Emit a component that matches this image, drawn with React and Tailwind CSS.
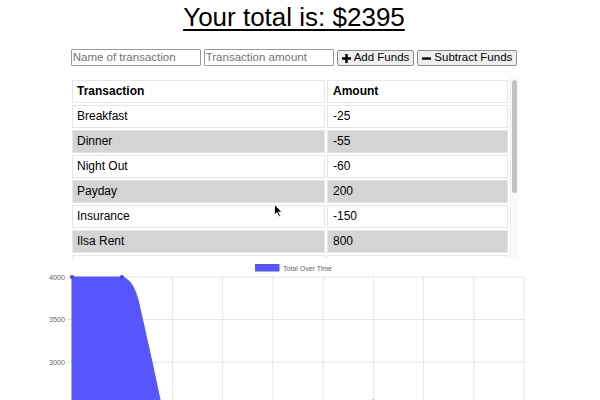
import React from "react";

const rows = [
  ["Breakfast", "-25"],
  ["Dinner", "-55"],
  ["Night Out", "-60"],
  ["Payday", "200"],
  ["Insurance", "-150"],
  ["Ilsa Rent", "800"],
  ["Groceries", "-120"],
  ["Gas", "-45"],
  ["Coffee", "-5"],
  ["Paycheck", "1850"],
];

function Plus() {
  return (
    <svg width="9" height="9" viewBox="0 0 9 9" className="shrink-0">
      <path d="M3.3 0h2.4v3.3H9v2.4H5.7V9H3.3V5.7H0V3.3h3.3z" fill="#000" />
    </svg>
  );
}

function Minus() {
  return (
    <svg width="9" height="9" viewBox="0 0 9 9" className="shrink-0">
      <rect x="0" y="3.4" width="9" height="2.3" fill="#000" />
    </svg>
  );
}

function Chart() {
  const xs = Array.from({ length: 10 }, (_, i) => 72 + i * 50.22);
  const ys = [277, 319.5, 362];
  const blue = "#5656fc";
  return (
    <svg width="600" height="142" viewBox="0 258 600 142" className="block">
      <rect x="255.5" y="264.5" width="23.5" height="6.5" fill={blue} stroke={blue} />
      <text x="283" y="271" fontSize="7" style={{ fill: "#666666" }} fontFamily="'Liberation Sans', Arial, sans-serif">
        Total Over Time
      </text>
      {ys.map((y) => (
        <line key={y} x1="66" x2="524.5" y1={y} y2={y} stroke="#e6e6e6" strokeWidth="1" />
      ))}
      {xs.map((x) => (
        <line key={x} x1={x} x2={x} y1="277" y2="400" stroke="#e6e6e6" strokeWidth="1" />
      ))}
      {[["4000", 277], ["3500", 319.5], ["3000", 362]].map(([t, y]) => (
        <text
          key={t}
          x="65"
          y={y + 2.6}
          fontSize="7.2"
          textAnchor="end"
          style={{ fill: "#666666" }}
          fontFamily="'Liberation Sans', Arial, sans-serif"
        >
          {t}
        </text>
      ))}
      <path
        d="M72 277 L122 277 C130 279 135 287 139 304 L152 362 L160.5 402 L72 402 Z"
        fill={blue}
        stroke={blue}
        strokeWidth="1"
      />
      <circle cx="72" cy="277" r="2" fill="#3d3df2" />
      <circle cx="122" cy="277" r="2" fill="#3d3df2" />
      <circle cx="373" cy="401.5" r="2" fill="#6a6af0" />
    </svg>
  );
}

export default function App() {
  return (
    <div className="relative h-[400px] w-[600px] overflow-hidden bg-white font-['Liberation_Sans',Arial,sans-serif] text-black">
      <div className="w-[588px]">
        <div className="pt-[2px] text-center text-[26px] leading-[30px] underline decoration-[1.5px] underline-offset-[3px]">
          Your total is: $2395
        </div>

        <div className="mt-[17px] flex items-end justify-center gap-[3px] text-[11.5px]">
          <input
            type="text"
            placeholder="Name of transaction"
            className="h-[17px] w-[130px] rounded-[1px] border border-[#9a9a9a] px-[1px] text-[11.5px] outline-none placeholder:text-[#727272]"
          />
          <input
            type="text"
            placeholder="Transaction amount"
            className="h-[17px] w-[130px] rounded-[1px] border border-[#9a9a9a] px-[1px] text-[11.5px] outline-none placeholder:text-[#727272]"
          />
          <button className="flex h-[16px] items-center gap-[3px] whitespace-nowrap rounded-[2px] border border-[#8c8c8c] bg-[#efefef] px-[4px] leading-none">
            <Plus />
            <span>Add Funds</span>
          </button>
          <button className="flex h-[16px] items-center gap-[3px] whitespace-nowrap rounded-[2px] border border-[#8c8c8c] bg-[#efefef] px-[4px] leading-none">
            <Minus />
            <span>Subtract Funds</span>
          </button>
        </div>

        <div className="relative mx-auto mt-[12px] h-[180px] w-[448px]">
          <div className="h-full w-full overflow-hidden">
            <table className="w-[440px] border-separate border-spacing-[2px] text-[12px] leading-[13px]">
              <thead>
                <tr>
                  <th className="h-[23px] w-[253px] border border-[#e6e6e6] px-[4px] text-left font-bold">
                    Transaction
                  </th>
                  <th className="h-[23px] border border-[#e6e6e6] px-[5px] text-left font-bold">
                    Amount
                  </th>
                </tr>
              </thead>
              <tbody>
                {rows.map(([name, amt], i) => (
                  <tr key={name} className={i % 2 === 1 ? "bg-[#d4d4d4]" : "bg-white"}>
                    <td className="h-[23px] border border-[#e6e6e6] px-[4px]">{name}</td>
                    <td className="h-[23px] border border-[#e6e6e6] px-[5px]">{amt}</td>
                  </tr>
                ))}
              </tbody>
            </table>
          </div>
          <div className="absolute right-0 top-0 h-full w-[8px] border-l border-[#eeeeee] bg-[#fafafa]">
            <div className="ml-[1px] mt-[2px] h-[113px] w-[5px] rounded-full bg-[#c2c2c2]" />
          </div>
        </div>

        <Chart />
      </div>

      <svg
        width="9"
        height="14"
        viewBox="0 0 9 14"
        className="absolute left-[274px] top-[204px]"
      >
        <path d="M0.5 0.5 L0.5 11 L3 8.6 L4.8 12.6 L6.4 11.9 L4.7 8 L8 8 Z" fill="#000" stroke="#fff" strokeWidth="0.8" />
      </svg>
    </div>
  );
}
